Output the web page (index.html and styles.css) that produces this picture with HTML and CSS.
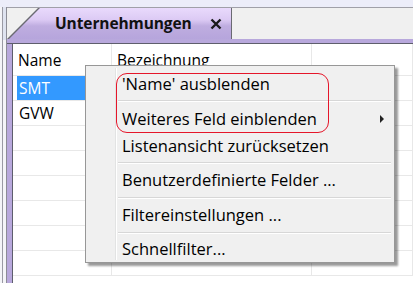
FILE: index.html
```html
<!DOCTYPE html>
<html lang="de">
<head>
  <meta charset="UTF-8">
  <meta name="viewport" content="width=device-width, initial-scale=1.0">
  <title>Unternehmungen</title>
  <link rel="stylesheet" href="styles.css">
</head>
<body>
  <div class="top"></div>

  <div class="main">
    <div class="edge"></div>

    <div class="window">
      <!-- Tab strip -->
      <div class="tabstrip">
        <div class="tab">
          <div class="tab-face">
            <span class="tab-title">Unternehmungen</span>
            <svg class="tab-close" width="12" height="12" viewBox="0 0 12 12">
              <path d="M1.5 1.5 L10.5 10.5 M10.5 1.5 L1.5 10.5" stroke="#1a1a1a" stroke-width="2.4" fill="none"/>
            </svg>
          </div>
        </div>
      </div>
      <div class="tabbar"></div>

      <!-- List view -->
      <div class="content">
        <div class="side"></div>
        <div class="list">
          <table class="grid">
            <tr class="head">
              <td class="c1"><div class="cell">Name</div></td>
              <td class="c2"><div class="cell">Bezeichnung</div></td>
              <td class="c3"></td>
            </tr>
            <tr>
              <td class="c1"><div class="cell selected">SMT</div></td>
              <td class="c2"></td>
              <td class="c3"></td>
            </tr>
            <tr>
              <td class="c1"><div class="cell">GVW</div></td>
              <td class="c2"></td>
              <td class="c3"></td>
            </tr>
            <tr><td class="c1"></td><td class="c2"></td><td class="c3"></td></tr>
            <tr><td class="c1"></td><td class="c2"></td><td class="c3"></td></tr>
            <tr><td class="c1"></td><td class="c2"></td><td class="c3"></td></tr>
            <tr><td class="c1"></td><td class="c2"></td><td class="c3"></td></tr>
            <tr><td class="c1"></td><td class="c2"></td><td class="c3"></td></tr>
            <tr><td class="c1"></td><td class="c2"></td><td class="c3"></td></tr>
          </table>
        </div>
      </div>
    </div>
  </div>

  <!-- Context menu -->
  <div class="menu">
    <div class="menu-item i1">'Name' ausblenden</div>
    <div class="menu-sep"></div>
    <div class="menu-item i2">Weiteres Feld einblenden <span class="arrow"></span></div>
    <div class="menu-item i3">Listenansicht zurücksetzen</div>
    <div class="menu-sep"></div>
    <div class="menu-item i4">Benutzerdefinierte Felder ...</div>
    <div class="menu-sep"></div>
    <div class="menu-item i5">Filtereinstellungen ...</div>
    <div class="menu-sep"></div>
    <div class="menu-item i6">Schnellfilter...</div>

    <!-- red marker round the first two items -->
    <div class="marker"></div>
  </div>
</body>
</html>
```

FILE: styles.css
```css
/* General styling */
html, body {
  margin: 0;
  padding: 0;
}
body {
  width: 413px;
  height: 283px;
  overflow: hidden;
  position: relative;
  background-color: #ecedf9;
  font-family: "Open Sans", "Noto Sans", sans-serif;
  color: #000;
}
.top {
  height: 7px;
}
.main {
  display: flex;
  height: 276px;
}
.edge {
  width: 6px;
  background: linear-gradient(to bottom, #dfe3f0 0, #dfe3f0 33px, #f4f4f8 33px);
  box-shadow: inset 2px 0 0 #f4f4f8, inset 3px 0 0 #9a9aa4;
}
.window {
  flex: 1;
  display: flex;
  flex-direction: column;
  border-left: 1px solid #8c8c96;
}

/* Tab strip */
.tabstrip {
  height: 31px;
  background-color: #f0f0f0;
  border-top: 1px solid #a0a0a8;
  display: flex;
}
.tab {
  width: 225px;
  height: 31px;
  background-color: #6a6a72;
  clip-path: polygon(0 100%, 31px 0, 100% 0, 100% 100%);
}
.tab-face {
  width: 224px;
  height: 31px;
  background: linear-gradient(to bottom, #e9dafc 0%, #dccaf4 38%, #bfade0 58%, #b6a5dc 100%);
  clip-path: polygon(2px 100%, 33px 0, 100% 0, 100% 100%);
  display: flex;
  align-items: center;
  box-sizing: border-box;
  padding: 0 0 1px 48px;
}
.tab-title {
  font-weight: bold;
  font-size: 15.5px;
  letter-spacing: -0.1px;
  color: #111;
}
.tab-close {
  margin-left: 18px;
  margin-top: 2px;
}
.tabbar {
  height: 4px;
  background-color: #b8a8dc;
  border-bottom: 1px solid #5e5e6c;
}

/* List view */
.content {
  flex: 1;
  display: flex;
  min-height: 0;
}
.side {
  width: 5px;
  background-color: #b8a8dc;
  border-right: 1px solid #5e5e6c;
}
.list {
  flex: 1;
  background-color: #fff;
  overflow: hidden;
}
.grid {
  border-collapse: collapse;
  width: 100%;
  font-size: 15.5px;
}
.grid td {
  height: 24px;
  padding: 0;
  border-bottom: 1px solid #e8e8e8;
  border-right: 1px solid #e8e8e8;
  vertical-align: middle;
}
.grid .head td {
  height: 30px;
}
.grid .c1 {
  width: 98px;
}
.grid .c2 {
  width: 199px;
}
.cell {
  height: 24px;
  line-height: 24px;
  margin-left: 4px;
  padding-left: 2px;
}
.head .cell {
  height: 30px;
  line-height: 30px;
  margin-left: 0;
  padding: 1px 0 0 5px;
}
.cell.selected {
  background-color: #3399ff;
  color: #fff;
}

/* Context menu */
.menu {
  position: absolute;
  left: 85px;
  top: 65px;
  width: 308px;
  height: 196px;
  background-color: #f0f0f0;
  border: 1px solid #979797;
  box-shadow: 3px 3px 2px rgba(0, 0, 0, 0.4);
  display: flex;
  flex-direction: column;
  font-size: 16.5px;
}
.menu::before {
  content: "";
  position: absolute;
  left: 29px;
  top: 2px;
  bottom: 2px;
  width: 1px;
  background-color: #e2e3e3;
  box-shadow: 1px 0 0 #fff;
}
.menu-item {
  display: flex;
  align-items: center;
  padding-left: 36px;
  position: relative;
  box-sizing: border-box;
}
.i1 { height: 33px; margin-top: 1px; }
.i2 { height: 31px; padding-top: 1px; }
.i3 { height: 29px; padding-bottom: 5px; }
.i4 { height: 33px; padding-bottom: 3px; }
.i5 { height: 33px; padding-bottom: 3px; }
.i6 { height: 28px; }
.menu-sep {
  height: 1px;
  margin: 0 3px 0 32px;
  background-color: #d7d7d7;
  border-bottom: 1px solid #fff;
}
.arrow {
  position: absolute;
  left: 294px;
  top: 50%;
  margin-top: -3px;
  border-left: 4px solid #222;
  border-top: 4px solid transparent;
  border-bottom: 4px solid transparent;
}
.marker {
  position: absolute;
  left: 30px;
  top: 7px;
  width: 211px;
  height: 58px;
  border: 1px solid #e5162a;
  border-radius: 11px;
}
```
